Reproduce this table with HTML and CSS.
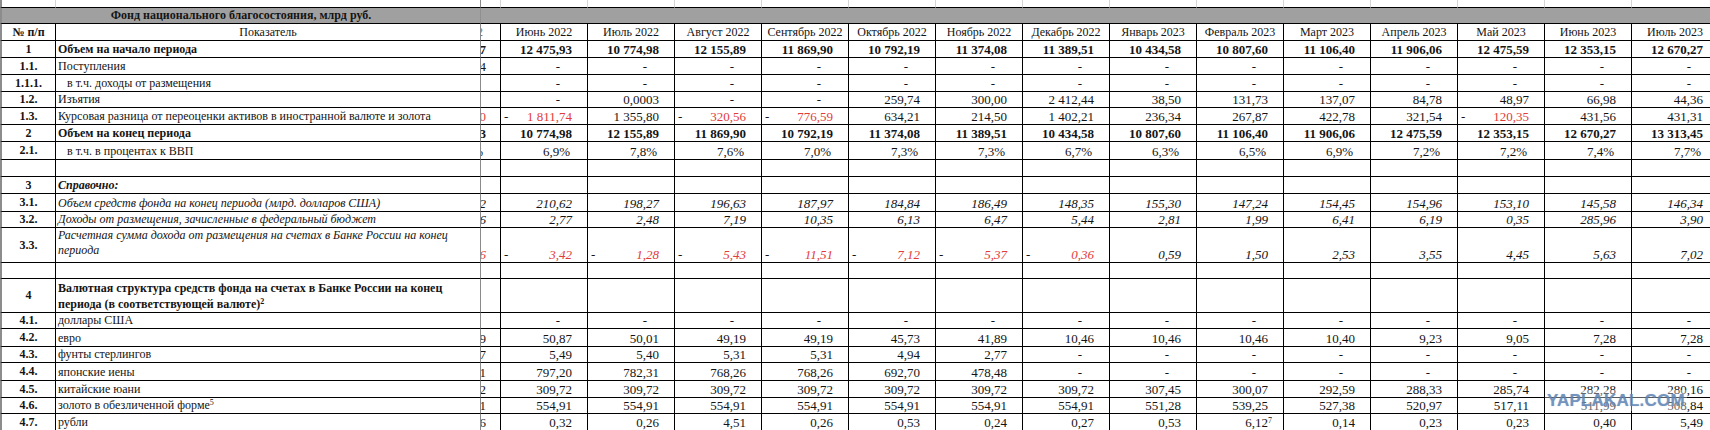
FILE: index.html
```html
<!DOCTYPE html>
<html lang="ru">
<head>
<meta charset="utf-8">
<title>Фонд национального благосостояния</title>
<link rel="stylesheet" href="styles.css">
</head>
<body>
<div class="sheet">
<table class="grid">
<colgroup><col class="c-n"><col class="c-l"><col class="c-s"><col class="c-m" span="14"></colgroup>
<tbody>
<tr class="strip h8"><td></td><td class="fz"></td><td></td><td></td><td></td><td></td><td></td><td></td><td></td><td></td><td></td><td></td><td></td><td></td><td></td><td></td><td></td></tr>
<tr class="title h16"><td colspan="2" class="tt">Фонд национального благосостояния, млрд руб.</td><td colspan="15" class="rest"></td></tr>
<tr class="h17"><td class="n">№ п/п</td><td class="l fz hc">Показатель</td><td class="s"><div class="sv hd">2</div></td><td class="mh">Июнь 2022</td><td class="mh">Июль 2022</td><td class="mh">Август 2022</td><td class="mh">Сентябрь 2022</td><td class="mh">Октябрь 2022</td><td class="mh">Ноябрь 2022</td><td class="mh">Декабрь 2022</td><td class="mh">Январь 2023</td><td class="mh">Февраль 2023</td><td class="mh">Март 2023</td><td class="mh">Апрель 2023</td><td class="mh">Май 2023</td><td class="mh">Июнь 2023</td><td class="mh">Июль 2023</td></tr>
<tr class="h17 b"><td class="n">1</td><td class="l fz">Объем на начало периода</td><td class="s"><div class="sv">7</div></td><td class="v">12 475,93</td><td class="v">10 774,98</td><td class="v">12 155,89</td><td class="v">11 869,90</td><td class="v">10 792,19</td><td class="v">11 374,08</td><td class="v">11 389,51</td><td class="v">10 434,58</td><td class="v">10 807,60</td><td class="v">11 106,40</td><td class="v">11 906,06</td><td class="v">12 475,59</td><td class="v">12 353,15</td><td class="v">12 670,27</td></tr>
<tr class="h17"><td class="n">1.1.</td><td class="l fz">Поступления</td><td class="s"><div class="sv">4</div></td><td class="z">-</td><td class="z">-</td><td class="z">-</td><td class="z">-</td><td class="z">-</td><td class="z">-</td><td class="z">-</td><td class="z">-</td><td class="z">-</td><td class="z">-</td><td class="z">-</td><td class="z">-</td><td class="z">-</td><td class="z">-</td></tr>
<tr class="h17"><td class="n">1.1.1.</td><td class="l fz ind">в т.ч. доходы от размещения</td><td class="s"></td><td class="z">-</td><td class="z">-</td><td class="z">-</td><td class="z">-</td><td class="z">-</td><td class="z">-</td><td class="z">-</td><td class="z">-</td><td class="z">-</td><td class="z">-</td><td class="z">-</td><td class="z">-</td><td class="z">-</td><td class="z">-</td></tr>
<tr class="h16"><td class="n">1.2.</td><td class="l fz">Изъятия</td><td class="s"></td><td class="z">-</td><td class="v">0,0003</td><td class="z">-</td><td class="z">-</td><td class="v">259,74</td><td class="v">300,00</td><td class="v">2 412,44</td><td class="v">38,50</td><td class="v">131,73</td><td class="v">137,07</td><td class="v">84,78</td><td class="v">48,97</td><td class="v">66,98</td><td class="v">44,36</td></tr>
<tr class="h17"><td class="n">1.3.</td><td class="l fz">Курсовая разница от переоценки активов в иностранной валюте и золота</td><td class="s"><div class="sv red">0</div></td><td class="neg"><div class="ng"><span>-</span><span class="r">1 811,74</span></div></td><td class="v">1 355,80</td><td class="neg"><div class="ng"><span>-</span><span class="r">320,56</span></div></td><td class="neg"><div class="ng"><span>-</span><span class="r">776,59</span></div></td><td class="v">634,21</td><td class="v">214,50</td><td class="v">1 402,21</td><td class="v">236,34</td><td class="v">267,87</td><td class="v">422,78</td><td class="v">321,54</td><td class="neg"><div class="ng"><span>-</span><span class="r">120,35</span></div></td><td class="v">431,56</td><td class="v">431,31</td></tr>
<tr class="h17 b"><td class="n">2</td><td class="l fz">Объем на конец периода</td><td class="s"><div class="sv">3</div></td><td class="v">10 774,98</td><td class="v">12 155,89</td><td class="v">11 869,90</td><td class="v">10 792,19</td><td class="v">11 374,08</td><td class="v">11 389,51</td><td class="v">10 434,58</td><td class="v">10 807,60</td><td class="v">11 106,40</td><td class="v">11 906,06</td><td class="v">12 475,59</td><td class="v">12 353,15</td><td class="v">12 670,27</td><td class="v">13 313,45</td></tr>
<tr class="h18"><td class="n">2.1.</td><td class="l fz ind">в т.ч. в процентах к ВВП</td><td class="s"><div class="sv pc">%</div></td><td class="v pc">6,9%</td><td class="v pc">7,8%</td><td class="v pc">7,6%</td><td class="v pc">7,0%</td><td class="v pc">7,3%</td><td class="v pc">7,3%</td><td class="v pc">6,7%</td><td class="v pc">6,3%</td><td class="v pc">6,5%</td><td class="v pc">6,9%</td><td class="v pc">7,2%</td><td class="v pc">7,2%</td><td class="v pc">7,4%</td><td class="v pc">7,7%</td></tr>
<tr class="h17"><td class="n"></td><td class="l fz"></td><td class="s"></td><td></td><td></td><td></td><td></td><td></td><td></td><td></td><td></td><td></td><td></td><td></td><td></td><td></td><td></td></tr>
<tr class="h17"><td class="n">3</td><td class="l fz b i">Справочно:</td><td class="s"></td><td></td><td></td><td></td><td></td><td></td><td></td><td></td><td></td><td></td><td></td><td></td><td></td><td></td><td></td></tr>
<tr class="h18 it"><td class="n">3.1.</td><td class="l fz i">Объем средств фонда на конец периода (млрд. долларов США)</td><td class="s"><div class="sv">2</div></td><td class="v">210,62</td><td class="v">198,27</td><td class="v">196,63</td><td class="v">187,97</td><td class="v">184,84</td><td class="v">186,49</td><td class="v">148,35</td><td class="v">155,30</td><td class="v">147,24</td><td class="v">154,45</td><td class="v">154,96</td><td class="v">153,10</td><td class="v">145,58</td><td class="v">146,34</td></tr>
<tr class="h16 it"><td class="n">3.2.</td><td class="l fz i">Доходы от размещения, зачисленные в федеральный бюджет</td><td class="s"><div class="sv">6</div></td><td class="v">2,77</td><td class="v">2,48</td><td class="v">7,19</td><td class="v">10,35</td><td class="v">6,13</td><td class="v">6,47</td><td class="v">5,44</td><td class="v">2,81</td><td class="v">1,99</td><td class="v">6,41</td><td class="v">6,19</td><td class="v">0,35</td><td class="v">285,96</td><td class="v">3,90</td></tr>
<tr class="h35 it"><td class="n">3.3.</td><td class="l fz i wrap">Расчетная сумма дохода от размещения на счетах в Банке России на конец<br>периода</td><td class="s"><div class="sv red">6</div></td><td class="neg"><div class="ng"><span>-</span><span class="r">3,42</span></div></td><td class="neg"><div class="ng"><span>-</span><span class="r">1,28</span></div></td><td class="neg"><div class="ng"><span>-</span><span class="r">5,43</span></div></td><td class="neg"><div class="ng"><span>-</span><span class="r">11,51</span></div></td><td class="neg"><div class="ng"><span>-</span><span class="r">7,12</span></div></td><td class="neg"><div class="ng"><span>-</span><span class="r">5,37</span></div></td><td class="neg"><div class="ng"><span>-</span><span class="r">0,36</span></div></td><td class="v">0,59</td><td class="v">1,50</td><td class="v">2,53</td><td class="v">3,55</td><td class="v">4,45</td><td class="v">5,63</td><td class="v">7,02</td></tr>
<tr class="h16"><td class="n"></td><td class="l fz"></td><td class="s"></td><td></td><td></td><td></td><td></td><td></td><td></td><td></td><td></td><td></td><td></td><td></td><td></td><td></td><td></td></tr>
<tr class="h34"><td class="n">4</td><td class="l fz b wrap2">Валютная структура средств фонда на счетах в Банке России на конец<br>периода (в соответствующей валюте)<span class="sup">2</span></td><td class="s"></td><td></td><td></td><td></td><td></td><td></td><td></td><td></td><td></td><td></td><td></td><td></td><td></td><td></td><td></td></tr>
<tr class="h16"><td class="n">4.1.</td><td class="l fz">доллары США</td><td class="s"></td><td class="z">-</td><td class="z">-</td><td class="z">-</td><td class="z">-</td><td class="z">-</td><td class="z">-</td><td class="z">-</td><td class="z">-</td><td class="z">-</td><td class="z">-</td><td class="z">-</td><td class="z">-</td><td class="z">-</td><td class="z">-</td></tr>
<tr class="h18"><td class="n">4.2.</td><td class="l fz">евро</td><td class="s"><div class="sv">9</div></td><td class="v">50,87</td><td class="v">50,01</td><td class="v">49,19</td><td class="v">49,19</td><td class="v">45,73</td><td class="v">41,89</td><td class="v">10,46</td><td class="v">10,46</td><td class="v">10,46</td><td class="v">10,40</td><td class="v">9,23</td><td class="v">9,05</td><td class="v">7,28</td><td class="v">7,28</td></tr>
<tr class="h16"><td class="n">4.3.</td><td class="l fz">фунты стерлингов</td><td class="s"><div class="sv">7</div></td><td class="v">5,49</td><td class="v">5,40</td><td class="v">5,31</td><td class="v">5,31</td><td class="v">4,94</td><td class="v">2,77</td><td class="z">-</td><td class="z">-</td><td class="z">-</td><td class="z">-</td><td class="z">-</td><td class="z">-</td><td class="z">-</td><td class="z">-</td></tr>
<tr class="h18"><td class="n">4.4.</td><td class="l fz">японские иены</td><td class="s"><div class="sv">1</div></td><td class="v">797,20</td><td class="v">782,31</td><td class="v">768,26</td><td class="v">768,26</td><td class="v">692,70</td><td class="v">478,48</td><td class="z">-</td><td class="z">-</td><td class="z">-</td><td class="z">-</td><td class="z">-</td><td class="z">-</td><td class="z">-</td><td class="z">-</td></tr>
<tr class="h17"><td class="n">4.5.</td><td class="l fz">китайские юани</td><td class="s"><div class="sv">2</div></td><td class="v">309,72</td><td class="v">309,72</td><td class="v">309,72</td><td class="v">309,72</td><td class="v">309,72</td><td class="v">309,72</td><td class="v">309,72</td><td class="v">307,45</td><td class="v">300,07</td><td class="v">292,59</td><td class="v">288,33</td><td class="v">285,74</td><td class="v">282,28</td><td class="v">280,16</td></tr>
<tr class="h16"><td class="n">4.6.</td><td class="l fz">золото в обезличенной форме<span class="sup">5</span></td><td class="s"><div class="sv">1</div></td><td class="v">554,91</td><td class="v">554,91</td><td class="v">554,91</td><td class="v">554,91</td><td class="v">554,91</td><td class="v">554,91</td><td class="v">554,91</td><td class="v">551,28</td><td class="v">539,25</td><td class="v">527,38</td><td class="v">520,97</td><td class="v">517,11</td><td class="v">511,99</td><td class="v">508,84</td></tr>
<tr class="h17"><td class="n">4.7.</td><td class="l fz">рубли</td><td class="s"><div class="sv">6</div></td><td class="v">0,32</td><td class="v">0,26</td><td class="v">4,51</td><td class="v">0,26</td><td class="v">0,53</td><td class="v">0,24</td><td class="v">0,27</td><td class="v">0,53</td><td class="v">6,12<span class="sup sv7">7</span></td><td class="v">0,14</td><td class="v">0,23</td><td class="v">0,23</td><td class="v">0,40</td><td class="v">5,49</td></tr>
</tbody>
</table>
<div class="wm">YAPLAKAL.COM</div>
</div>
</body>
</html>
```

FILE: styles.css
```css
* { box-sizing: border-box; }
html, body { margin: 0; padding: 0; background: #fff; }
body {
  font-family: "Liberation Serif", "Times New Roman", serif;
  font-size: 12px;
  color: #141414;
  width: 1710px;
  height: 430px;
  overflow: hidden;
}
.sheet { position: relative; width: 1710px; height: 430px; overflow: hidden; }

.grid {
  border-collapse: separate;
  border-spacing: 0;
  table-layout: fixed;
  width: 1719px;
}
col.c-n { width: 56px; }
col.c-l { width: 425px; }
col.c-s { width: 20px; }
col.c-m { width: 87px; }

.grid td {
  padding: 0;
  border-right: 1px solid #000;
  border-bottom: 1px solid #000;
  line-height: 15px;
  vertical-align: bottom;
  white-space: nowrap;
  overflow: hidden;
}
.grid td:first-child { border-left: 2px solid #8c8c8c; }

.h8 { height: 8px; }
.h16 { height: 16px; }
.h17 { height: 17px; }
.h18 { height: 18px; }
.h34 { height: 34px; }
.h35 { height: 35px; }

/* top gridline strip */
.grid .strip td { border-right-color: #d6d6d6; }
.grid .strip td.fz { border-right-color: #8a8a8a; }

/* title */
.grid .title td { background: #a0a0a0; }
.grid .title td.tt { text-align: center; font-weight: bold; border-right-color: #8f8f8f; }
.grid .title td.rest { border-right: none; }

/* freeze pane line */
.grid td.fz { border-right-color: #8a8a8a; }

.grid td.n { text-align: center; font-weight: bold; vertical-align: middle; }
.grid td.l { padding-left: 2px; }
.grid td.ind { padding-left: 11px; }
.grid td.hc { text-align: center; padding-left: 0; }
.grid td.b { font-weight: bold; }
.grid td.i { font-style: italic; }
.grid td.wrap { vertical-align: top; line-height: 15px; padding-top: 0; }
.grid td.wrap2 { vertical-align: bottom; line-height: 16px; padding-bottom: 0; }

.grid td.mh { text-align: center; }

/* bold summary rows */
.grid tr.b td { font-weight: bold; }

/* values */
.grid td.v { text-align: right; padding-right: 15px; font-size: 13px; }
.grid td.pc { padding-right: 17px; }
.grid td.z { text-align: right; padding-right: 27px; font-size: 13px; }
.grid td.neg { font-size: 13px; }
.ng { display: flex; justify-content: space-between; padding: 0 15px 0 3px; }
.ng .r, .red { color: #e23b3b; }
.grid tr.it td.v, .grid tr.it td.neg, .grid tr.it .sv { font-style: italic; }

/* clipped column behind the freeze line */
.grid td.s { font-size: 13px; }
.sv {
  width: 87px;
  margin-left: -68px;
  text-align: right;
  padding-right: 14px;
}
.sv.pc { padding-right: 17px; }
.sv.hd { font-size: 12px; padding-right: 17px; color: #777; }

.sup { font-size: 8px; vertical-align: 4px; line-height: 0; }
.sv7 { margin-right: -4px; }

/* watermark */
.wm {
  position: absolute;
  left: 1545px;
  top: 390px;
  padding: 0 2px;
  font-family: "Liberation Sans", Arial, sans-serif;
  font-weight: bold;
  font-size: 17px;
  line-height: 21px;
  letter-spacing: 0.2px;
  color: rgba(96, 136, 186, 0.8);
  background: rgba(255, 255, 255, 0.35);
  text-shadow: 0 0 1px rgba(60, 90, 130, 0.4);
}
```
